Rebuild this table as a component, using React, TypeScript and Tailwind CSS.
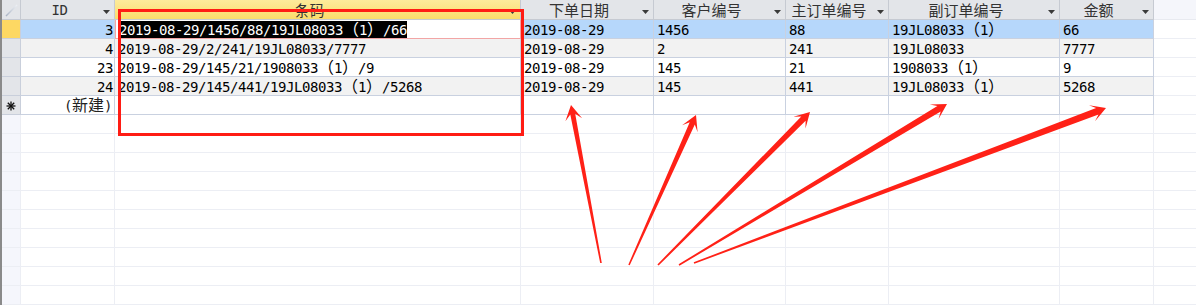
import React from "react";
import clsx from "clsx";

// --- Daten ---
type Row = {
  id: string;
  code: string;
  date: string;
  cust: string;
  main: string;
  sub: string;
  amt: string;
};

const ROWS: Row[] = [
  { id: "3", code: "2019-08-29/1456/88/19JL08033（1）/66", date: "2019-08-29", cust: "1456", main: "88", sub: "19JL08033（1）", amt: "66" },
  { id: "4", code: "2019-08-29/2/241/19JL08033/7777", date: "2019-08-29", cust: "2", main: "241", sub: "19JL08033", amt: "7777" },
  { id: "23", code: "2019-08-29/145/21/1908033（1）/9", date: "2019-08-29", cust: "145", main: "21", sub: "1908033（1）", amt: "9" },
  { id: "24", code: "2019-08-29/145/441/19JL08033（1）/5268", date: "2019-08-29", cust: "145", main: "441", sub: "19JL08033（1）", amt: "5268" },
];

const COLS: { key: keyof Row; title: string; w: string }[] = [
  { key: "id", title: "ID", w: "w-[94px]" },
  { key: "code", title: "条码", w: "w-[406px]" },
  { key: "date", title: "下单日期", w: "w-[133px]" },
  { key: "cust", title: "客户编号", w: "w-[132px]" },
  { key: "main", title: "主订单编号", w: "w-[103px]" },
  { key: "sub", title: "副订单编号", w: "w-[171px]" },
  { key: "amt", title: "金额", w: "w-[94px]" },
];

const MONO = "font-['DejaVu_Sans_Mono',monospace] text-[14px] tracking-[-0.43px]";
const CJK = "font-['Noto_Sans_CJK_SC',sans-serif] text-[16px] tracking-normal leading-[10px]";

// ASCII in Monospace, CJK-Zeichen in voller Breite
const Mixed: React.FC<{ text: string }> = ({ text }) => {
  const parts = text.split(/([^\x00-\x7f]+)/).filter(Boolean);
  return (
    <>
      {parts.map((p, i) =>
        /[^\x00-\x7f]/.test(p) ? (
          <span key={i} className={CJK}>
            {p}
          </span>
        ) : (
          <span key={i}>{p}</span>
        )
      )}
    </>
  );
};

const DropArrow = () => (
  <svg width="7" height="4" viewBox="0 0 7 4">
    <polygon points="0,0 7,0 3.5,4" fill="#3a3a3a" />
  </svg>
);

const HeadCell: React.FC<{ title: string; w: string; active?: boolean }> = ({ title, w, active }) => {
  const ascii = /^[\x00-\x7f]+$/.test(title);
  return (
    <div
      className={clsx(
        "flex h-[20px] shrink-0 border-b border-r border-[#c6cad2]",
        w,
        active ? "bg-linear-to-b from-[#fdeb9b] to-[#fbdc6a]" : "bg-[#e3e5e9]"
      )}
    >
      <div
        className={clsx(
          "flex-1 text-center text-[#333]",
          ascii
            ? "pt-[1px] leading-[18px] " + MONO
            : "font-['Noto_Sans_CJK_SC',sans-serif] text-[15px] leading-[19px]"
        )}
      >
        {title}
      </div>
      <div className="flex w-[16px] justify-center pt-[10px]">
        <DropArrow />
      </div>
    </div>
  );
};

function arrowPoints(x1: number, y1: number, x2: number, y2: number, shaft: number) {
  const dx = x2 - x1;
  const dy = y2 - y1;
  const len = Math.hypot(dx, dy);
  const ux = dx / len;
  const uy = dy / len;
  const nx = -uy;
  const ny = ux;
  const head = 15;
  const half = 8.5;
  const jx = x2 - ux * head * 0.62;
  const jy = y2 - uy * head * 0.62;
  const bx = x2 - ux * head;
  const by = y2 - uy * head;
  const pts = [
    [x1 + nx * 0.8, y1 + ny * 0.8],
    [jx + nx * shaft, jy + ny * shaft],
    [bx + nx * half, by + ny * half],
    [x2, y2],
    [bx - nx * half, by - ny * half],
    [jx - nx * shaft, jy - ny * shaft],
    [x1 - nx * 0.8, y1 - ny * 0.8],
  ];
  return pts.map((p) => p.map((v) => v.toFixed(1)).join(",")).join(" ");
}

const ARROWS: [number, number, number, number, number][] = [
  [601, 263, 571, 105, 2.5],
  [629, 265, 696, 115, 2.8],
  [658, 265, 810, 112, 3],
  [679, 265, 947, 104, 3.2],
  [694, 263, 1106, 108, 3.5],
];

const App: React.FC = () => {
  return (
    <div className="relative h-[305px] w-[1196px] overflow-hidden bg-white">
      <div className="flex h-full flex-col border-l-2 border-[#8a8a8a]">
        {/* --- Kopfzeile --- */}
        <div className="flex">
          <div className="h-[20px] w-[19px] shrink-0 border-b border-r border-[#c6cad2] bg-[#e3e5e9]">
            <svg width="18" height="19" viewBox="0 0 18 19">
              <defs>
                <linearGradient id="diag" x1="0" y1="1" x2="1" y2="0">
                  <stop offset="0" stopColor="#a9b3c4" />
                  <stop offset="1" stopColor="#eef1f5" />
                </linearGradient>
              </defs>
              <line x1="4" y1="16" x2="15" y2="5" stroke="url(#diag)" strokeWidth="1.4" />
            </svg>
          </div>
          {COLS.map((c) => (
            <HeadCell key={c.key} title={c.title} w={c.w} active={c.key === "code"} />
          ))}
          <div className="h-[20px] flex-1 border-b border-[#e8eaf0] bg-[#f5f6fb]" />
        </div>

        {/* --- Datenzeilen --- */}
        {ROWS.map((r, ri) => {
          const selected = ri === 0;
          const alt = ri % 2 === 1;
          return (
            <div key={r.id} className={clsx("flex text-black", MONO)}>
              <div
                className={clsx(
                  "h-[19px] w-[19px] shrink-0 border-b border-r border-[#c9cfdb]",
                  selected ? "bg-[#fdd863]" : "bg-[#e3e5e9]"
                )}
              />
              {COLS.map((c) => {
                const active = selected && c.key === "code";
                return (
                  <div
                    key={c.key}
                    className={clsx(
                      "h-[19px] shrink-0 overflow-hidden whitespace-nowrap border-b border-r",
                      c.w,
                      active
                        ? "border-[#f2a5a5] bg-white pt-[1px] pl-[4px] shadow-[inset_1px_0_0_#f2a5a5]"
                        : "border-[#c9d1e0] pt-[3px] leading-[15px]",
                      !active && (selected ? "bg-[#b6d7fb]" : alt ? "bg-[#f2f2f2]" : "bg-white"),
                      !active && (c.key === "id" ? "pr-[1px] text-right" : "pl-[3px]")
                    )}
                  >
                    {active ? (
                      <span className="inline-block h-[17px] bg-black align-top leading-[19px] text-white">
                        <Mixed text={r[c.key]} />
                      </span>
                    ) : (
                      <Mixed text={r[c.key]} />
                    )}
                  </div>
                );
              })}
              <div className="h-[19px] flex-1 border-b border-[#eceef4]" />
            </div>
          );
        })}

        {/* --- Neue Zeile --- */}
        <div className={clsx("flex text-[#222]", MONO)}>
          <div className="flex h-[19px] w-[19px] shrink-0 items-center justify-center border-b border-r border-[#c9cfdb] bg-[#e3e5e9]">
            <svg width="10" height="10" viewBox="0 0 10 10" className="mt-[1px]">
              <g stroke="#111" strokeWidth="1.3">
                <line x1="5" y1="0.5" x2="5" y2="9.5" />
                <line x1="0.5" y1="5" x2="9.5" y2="5" />
                <line x1="1.8" y1="1.8" x2="8.2" y2="8.2" />
                <line x1="8.2" y1="1.8" x2="1.8" y2="8.2" />
              </g>
            </svg>
          </div>
          {COLS.map((c) => (
            <div
              key={c.key}
              className={clsx(
                "h-[19px] shrink-0 whitespace-nowrap border-b border-r border-[#c9d1e0] bg-white pt-[3px] leading-[15px]",
                c.w,
                c.key === "id" && "pr-[2px] text-right"
              )}
            >
              {c.key === "id" && <Mixed text="(新建)" />}
            </div>
          ))}
          <div className="h-[19px] flex-1 border-b border-[#eceef4]" />
        </div>

        {/* --- Leerer Bereich --- */}
        {Array.from({ length: 10 }).map((_, i) => (
          <div key={i} className="flex">
            <div className="h-[19px] w-[19px] shrink-0 border-b border-r border-[#eceef4] bg-[#f5f6fc]" />
            {COLS.map((c) => (
              <div key={c.key} className={clsx("h-[19px] shrink-0 border-b border-r border-[#eceef4]", c.w)} />
            ))}
            <div className="h-[19px] flex-1 border-b border-[#eceef4]" />
          </div>
        ))}
      </div>

      {/* --- Markierungen --- */}
      <div className="pointer-events-none absolute left-[118px] top-[9px] h-[127px] w-[406px] border-[3px] border-[#ff1c14]" />
      <svg className="pointer-events-none absolute left-0 top-0" width="1196" height="305">
        {ARROWS.map(([x1, y1, x2, y2, s], i) => (
          <polygon key={i} points={arrowPoints(x1, y1, x2, y2, s)} fill="#ff2117" />
        ))}
      </svg>
    </div>
  );
};

export default App;
